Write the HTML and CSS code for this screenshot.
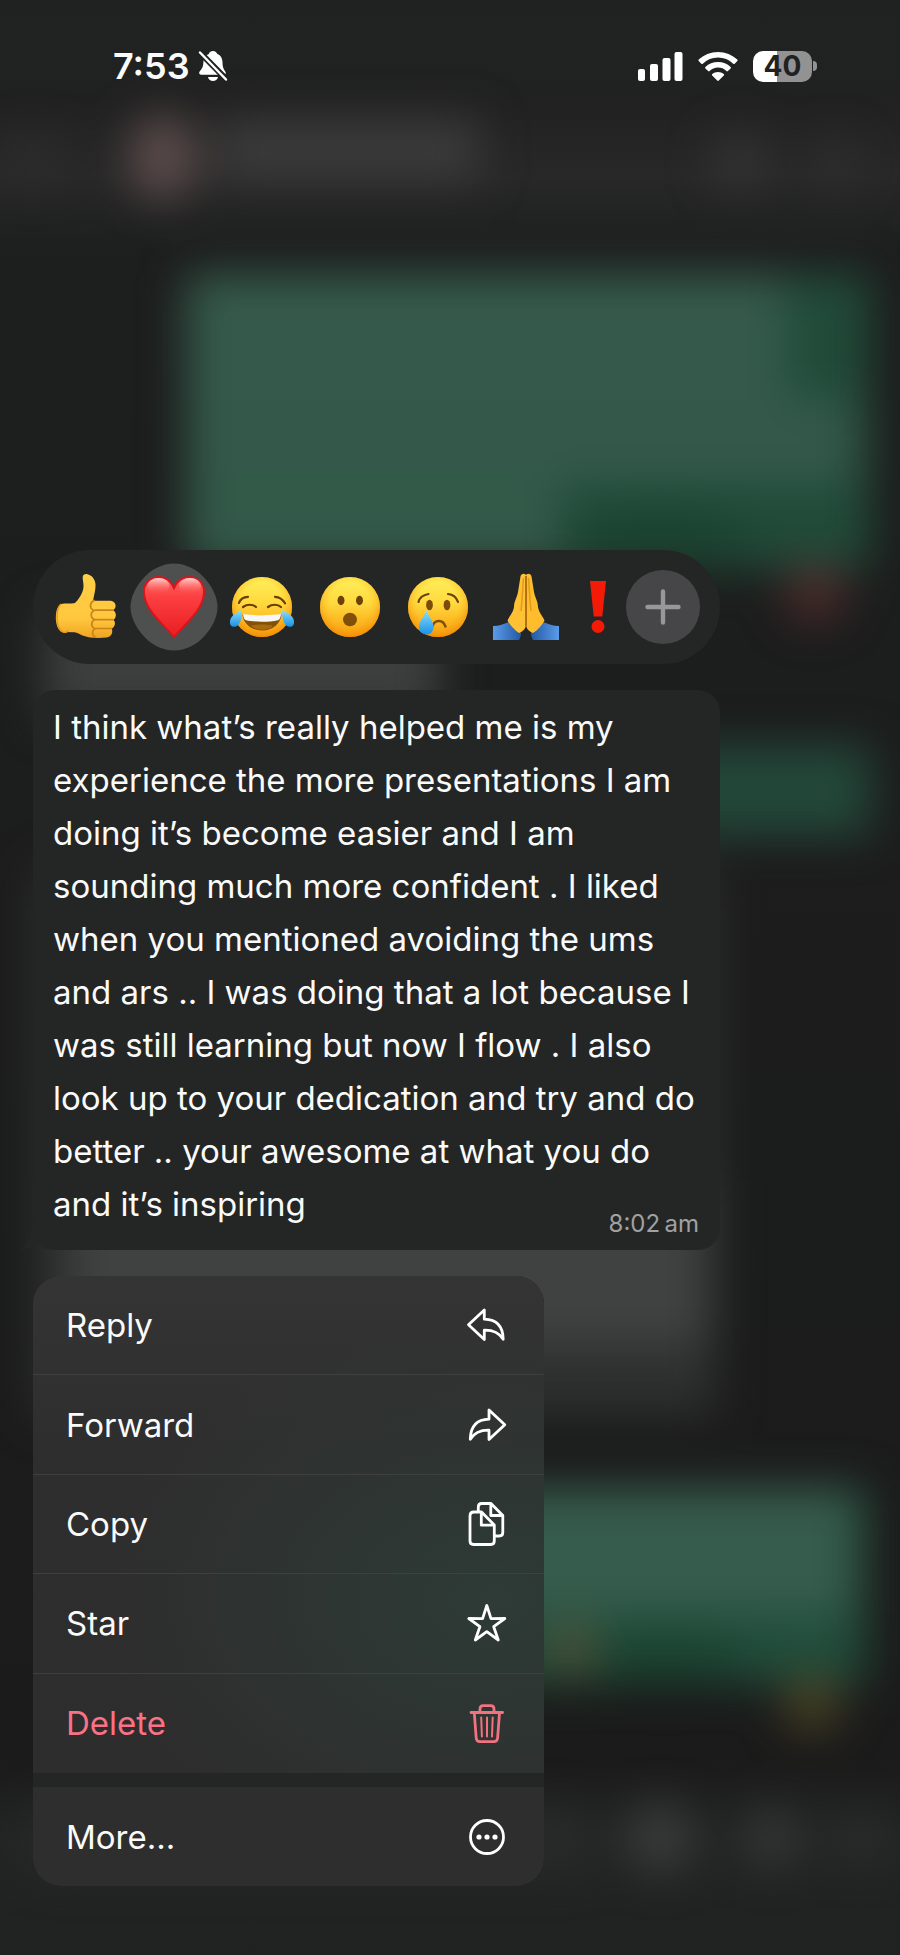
FILE: index.html
```html
<!DOCTYPE html>
<html lang="en">
<head>
<meta charset="utf-8">
<meta name="viewport" content="width=device-width, initial-scale=1">
<title>Message actions</title>
<link rel="stylesheet" href="styles.css">
</head>
<body>
<svg class="backdrop" viewBox="0 0 900 1955" preserveAspectRatio="none" aria-hidden="true">
  <defs>
    <filter id="soft" color-interpolation-filters="sRGB" filterUnits="userSpaceOnUse" x="-100" y="-100" width="1100" height="2155"><feGaussianBlur stdDeviation="22"/></filter>
    <linearGradient id="base" x1="0" y1="0" x2="0" y2="1">
      <stop offset="0" stop-color="#202222"/><stop offset=".05" stop-color="#212121"/><stop offset=".09" stop-color="#282828"/>
      <stop offset=".13" stop-color="#1d1e1e"/><stop offset=".9" stop-color="#1b1b1b"/><stop offset=".94" stop-color="#232424"/><stop offset="1" stop-color="#202121"/>
    </linearGradient>
  </defs>
  <rect width="900" height="1955" fill="url(#base)"/>
  <g filter="url(#soft)">
    <rect x="215" y="120" width="265" height="60" fill="#3c3b3b"/>
    <ellipse cx="163" cy="157" rx="34" ry="42" fill="#5d4c4c"/>
    <rect x="0" y="140" width="65" height="40" fill="#2d2d2d"/>
    <circle cx="740" cy="162" r="28" fill="#353434"/>
    <circle cx="835" cy="165" r="24" fill="#302f2f"/>
    <rect x="186" y="274" width="684" height="294" fill="#214b39"/>
    <rect x="186" y="274" width="600" height="204" fill="#355a4b"/>
    <rect x="186" y="400" width="670" height="82" fill="#34594a"/>
    <rect x="186" y="470" width="374" height="98" fill="#335949"/>
    <ellipse cx="660" cy="535" rx="90" ry="25" fill="#1b4330"/>
    <circle cx="815" cy="592" r="30" fill="#4d2b2a"/>
    <rect x="45" y="610" width="395" height="110" fill="#3d3f3e"/>
    <rect x="500" y="746" width="370" height="90" fill="#23483a"/>
    <rect x="36" y="870" width="680" height="545" fill="#2e2f2f"/>
    <rect x="70" y="1180" width="640" height="165" fill="#404141"/>
    <rect x="230" y="1488" width="636" height="195" fill="#214d3b"/>
    <rect x="230" y="1488" width="625" height="125" fill="#365c4d"/>
    <ellipse cx="665" cy="1660" rx="80" ry="24" fill="#1b4330"/>
    <circle cx="572" cy="1648" r="27" fill="#4b5139"/>
    <circle cx="812" cy="1703" r="29" fill="#484023"/>
    <rect x="30" y="1810" width="560" height="60" fill="#292a2a"/>
    <circle cx="660" cy="1838" r="34" fill="#3a3b3b"/>
    <circle cx="772" cy="1838" r="29" fill="#353636"/>
    <circle cx="860" cy="1838" r="24" fill="#2d2e2e"/>
  </g>
</svg>

<div class="screen">
  <header class="status">
    <div class="status-left">
      <time class="clock">7:53</time>
      <svg width="30" height="32" viewBox="0 0 30 32" role="img" aria-label="Silent">
        <path fill="#fff" d="M10.800 4C11.600 1.800 13 1 15 1s3.500 1 4.300 3c3.600 1.300 5.200 4.600 5.200 8.500 0 3.800.9 6.600 2.600 8.700 1 1.300.9 3.500-.8 3.500H3C1 24.700.7 22.700 1.800 21.300 4.300 18.500 5.300 16.500 5.400 12c.1-3.800 1.900-6.700 5.400-8zM10 27h10c-.5 2.400-2.600 4-5 4s-4.500-1.600-5-4z"/>
        <path d="M1 1.500 29 30" stroke="#212121" stroke-width="6"/>
        <path d="M2 2.500 28 29.500" stroke="#fff" stroke-width="2.500" stroke-linecap="round"/>
      </svg>
    </div>
    <div class="status-right">
      <svg width="45" height="29" viewBox="0 0 45 29" fill="#fff" role="img" aria-label="Signal"><rect y="17" width="7" height="12" rx="2"/><rect x="12" y="12" width="8" height="17" rx="2"/><rect x="24.500" y="6" width="8" height="23" rx="2"/><rect x="36.500" width="8" height="29" rx="2"/></svg>
      <svg width="40" height="30" viewBox="0 0 40 30" fill="#fff" role="img" aria-label="Wi-Fi"><path d="M20 1c7.500 0 14.300 2.900 19.300 7.600.5.500.5 1 0 1.500l-2.600 2.600c-.5.500-1 .5-1.500 0A22 22 0 0 0 20 6.600 22 22 0 0 0 4.800 12.700c-.5.500-1 .5-1.500 0L.7 10.100c-.5-.5-.5-1 0-1.500C5.700 3.900 12.500 1 20 1z"/><path d="M20 11c4.900 0 9.300 1.900 12.600 4.900.5.500.5 1 0 1.500L29.900 20c-.5.500-1 .5-1.500 0A12.300 12.300 0 0 0 20 16.600c-3.200 0-6.200 1.300-8.400 3.400-.5.500-1 .5-1.500 0l-2.700-2.600c-.5-.5-.5-1 0-1.500C10.700 12.900 15.100 11 20 11z"/><path d="M20 21c2.200 0 4.200.8 5.800 2.100.5.500.5 1 0 1.500l-5 4.900c-.5.500-1.100.5-1.600 0l-5-4.900c-.5-.5-.5-1 0-1.500C15.800 21.800 17.800 21 20 21z"/></svg>
      <div class="battery"><span class="level">40</span><span class="nub"></span></div>
    </div>
  </header>

  <main class="focus">
    <div class="reactions">
      <button class="react" aria-label="Thumbs up">
        <svg width="66" height="68" viewBox="0 0 66 68"><defs><linearGradient id="th" x1="0" y1="0" x2="0" y2="1"><stop offset="0" stop-color="#ffcf48"/><stop offset=".7" stop-color="#ffc73e"/><stop offset="1" stop-color="#f0a321"/></linearGradient></defs>
          <path fill="url(#th)" d="M8 31c5-1 10 0 14-1 4-4 8-10 8.500-16 .2-4-1-7.500-.8-10C30 1.500 32 .8 34.500 1.200c4 .8 7.500 4.500 8 10 .4 5-1.400 10-2.500 16.500h17c6 0 7.500 7 3 9.500 4 2 3.500 8 .3 9.500 3 2.500 1.700 7.500-1.800 8.800 2 3.500 0 8.500-5 9-8 1-18 .5-24-2-3-1.200-5-3-8-3.200L9 59C1 56 1 34 8 31z"/>
          <path d="M8 31c-6 6-5 25 2 28 3 .8 5-.2 5-2" fill="none" stroke="#e59b20" stroke-width="1.500"/>
          <path d="M41 27.500c-4 2-5 7-1 9.500M60 37.200H42c-5 1.500-5 8 0 9.400h18M41.500 46.800c-4 2-3.500 7.500.5 8.700h16.500M42 55.700c-3 1.500-3.500 6 0 8.200" fill="none" stroke="#c98518" stroke-width="1.700" stroke-linecap="round"/></svg>
      </button>
      <button class="react selected" aria-label="Heart" aria-pressed="true">
        <svg class="halo" viewBox="0 0 88 88" aria-hidden="true"><path fill="#4e504f" d="M44 .5C54 .5 65 5 73.500 14S87.500 34 87.500 44 82 65 73.500 74 54 87.500 44 87.500 23 83 14.500 74 .5 54 .5 44 6 23 14.500 14 34 .5 44 .5z"/></svg>
        <svg width="64" height="64" viewBox="0 0 64 64"><defs><linearGradient id="he" x1="0" y1="0" x2="0" y2="1"><stop offset="0" stop-color="#ff6662"/><stop offset=".35" stop-color="#fb3e40"/><stop offset="1" stop-color="#e91d22"/></linearGradient><linearGradient id="hh" x1="0" y1="0" x2="0" y2="1"><stop offset="0" stop-color="#ffd5d0"/><stop offset="1" stop-color="#ff5554" stop-opacity="0"/></linearGradient></defs>
          <path d="M32 62C20 48 3 35 2 18 1 8 9 2 17 2c7 0 12 4 15 11C35 6 40 2 47 2c8 0 16 6 15 16-1 17-18 30-30 44z" fill="url(#he)" stroke="#d8151c" stroke-width="2"/>
          <ellipse cx="16.500" cy="11" rx="11" ry="8" fill="url(#hh)"/><ellipse cx="48" cy="11" rx="11" ry="8" fill="url(#hh)"/></svg>
      </button>
      <button class="react" aria-label="Tears of joy">
        <svg width="66" height="62" viewBox="0 0 66 62"><defs><linearGradient id="fa" x1="0" y1="0" x2="0" y2="1"><stop offset="0" stop-color="#fff05a"/><stop offset=".45" stop-color="#ffd83d"/><stop offset="1" stop-color="#fa9a0a"/></linearGradient><radialGradient id="fr" cx=".5" cy=".42" r=".58"><stop offset=".55" stop-color="#ffc928" stop-opacity="0"/><stop offset="1" stop-color="#f18a05" stop-opacity=".85"/></radialGradient><linearGradient id="te" x1="0" y1="0" x2="0" y2="1"><stop offset="0" stop-color="#8be0fc"/><stop offset="1" stop-color="#1a91e6"/></linearGradient></defs>
          <circle cx="33" cy="31" r="30" fill="url(#fa)"/><circle cx="33" cy="31" r="30" fill="url(#fr)"/>
          <path d="M10 27c1-3.500 4-6 9-6.200M46 20.800c5 .2 8 3 10 6.500M14 31c4-3 10-3 13 0M39 31c4-3 10-3 13 0" stroke="#6b3f00" stroke-width="2.200" fill="none" stroke-linecap="round"/>
          <path d="M13.500 38.500c12 1.500 27 1.500 39 0C52 47 44 54.500 33 54.500S14 47 13.500 38.500z" fill="#855008"/><path d="M14 38c12 1.500 26 1.500 38 0-.3 3-1 5.800-3 6.200-9 2-23 2-32 0-2-.4-2.700-3.200-3-6.200z" fill="#f7f7f7"/><path d="M22 50c4-2 18-2 22 0-5 5-17 5-22 0z" fill="#a96a0e"/>
          <path d="M12.500 34c1.500 8-2 17-7.500 16.800C-.5 50.500 0 43 4 39.500 7 37 10 36 12.500 34zM53.500 34c-1.500 8 2 17 7.500 16.800 5.500-.3 5-7.800 1-11.300-3-2.500-6-3.500-8.500-5.500z" fill="url(#te)"/></svg>
      </button>
      <button class="react" aria-label="Surprised">
        <svg width="62" height="62" viewBox="0 0 62 62"><circle cx="31" cy="31" r="30" fill="url(#fa)"/><circle cx="31" cy="31" r="30" fill="url(#fr)"/><ellipse cx="22" cy="24.500" rx="3.500" ry="4.700" fill="#6d4107"/><ellipse cx="40.500" cy="24.500" rx="3.500" ry="4.700" fill="#6d4107"/><ellipse cx="31" cy="43.500" rx="7" ry="6.800" fill="#80500a"/></svg>
      </button>
      <button class="react" aria-label="Sad">
        <svg width="62" height="62" viewBox="0 0 62 62"><circle cx="31" cy="31" r="30" fill="url(#fa)"/><circle cx="31" cy="31" r="30" fill="url(#fr)"/><ellipse cx="22.500" cy="29" rx="3.400" ry="5.200" fill="#7b4c0a"/><ellipse cx="40" cy="29" rx="3.400" ry="5.200" fill="#7b4c0a"/><path d="M11.500 26c1-4.500 4.500-7 10-8M41 18c5 .5 8.500 3.500 10 8" stroke="#6d4107" stroke-width="2.200" fill="none" stroke-linecap="round"/><path d="M25 51c2.500-8 11-8 13.500-.5" stroke="#80500a" stroke-width="2.500" fill="none" stroke-linecap="round"/><path d="M19.500 34c-2.500 7-7.500 11-7.500 17 0 4.500 3.500 7.500 7.500 7.500S26.500 55.500 26.500 51c0-6-5-10-7-17z" fill="url(#te)"/></svg>
      </button>
      <button class="react" aria-label="Folded hands">
        <svg width="68" height="68" viewBox="0 0 68 68"><defs><linearGradient id="sl" x1="0" y1="0" x2="1" y2="0"><stop offset="0" stop-color="#5a9bea"/><stop offset="1" stop-color="#2459a3"/></linearGradient><linearGradient id="sr" x1="1" y1="0" x2="0" y2="0"><stop offset="0" stop-color="#5a9bea"/><stop offset="1" stop-color="#2459a3"/></linearGradient></defs>
          <path d="M1 53c6 0 11-2 17-4.500L29 60c0 3-1 5-2 7H1z" fill="url(#sl)"/><path d="M67 53c-6 0-11-2-17-4.500L39 60c0 3 1 5 2 7h26z" fill="url(#sr)"/>
          <path d="M34 2c-1.500-2-5-1.500-5.500 1.500L26 19c-1 6-4 9-4 15-1 6-4.500 9-6.500 13.500C18 52 22 57 27 60c5-2 7-5 7-9z" fill="#ffc133"/><path d="M34 2c1.500-2 5-1.500 5.500 1.500L42 19c1 6 4 9 4 15 1 6 4.500 9 6.500 13.500C50 52 46 57 41 60c-5-2-7-5-7-9z" fill="#ffbd2d"/>
          <path d="M34 3v50" stroke="#a96b10" stroke-width="1.800"/><path d="M31.500 5c-1 12-1.500 25-2.500 33M36.500 5c1 12 1.500 25 2.500 33" stroke="#e49a1c" stroke-width="1.500" fill="none"/></svg>
      </button>
      <button class="react last" aria-label="Exclamation mark">
        <svg width="18" height="54" viewBox="0 0 18 54" fill="#f31a08"><path d="M1 1h16l-3.700 35.500H4.700z"/><circle cx="9" cy="46.500" r="6.500"/></svg>
      </button>
      <button class="add" aria-label="More reactions">
        <svg width="36" height="36" viewBox="0 0 36 36"><path d="M18 2.500v31M2.500 18h31" stroke="#98989b" stroke-width="4.400" stroke-linecap="round"/></svg>
      </button>
    </div>

    <article class="bubble">
      <svg class="tail" width="30" height="50" viewBox="0 0 30 50" aria-hidden="true"><path d="M13 0h17v50c-5-1-8-3-10-5-5 3-12 4-20 4C8 44 13 35 13 20z" fill="#242625"/></svg>
      <p class="text">I think what’s really helped me is my<br>experience the more presentations I am<br>doing it’s become easier and I am<br>sounding much more confident . I liked<br>when you mentioned avoiding the ums<br>and ars .. I was doing that a lot because I<br>was still learning but now I flow . I also<br>look up to your dedication and try and do<br>better .. your awesome at what you do<br>and it’s inspiring</p>
      <time class="sent">8:02&#8201;am</time>
    </article>

    <div class="menu">
      <div class="group">
        <button class="item">Reply<svg class="icon" viewBox="0 0 42 44"><path d="M18.300 7v9.200C30 16.500 37 22 37.200 36.300 33 29.500 27 27 18.300 27.200v9.300L2.500 21.700z"/></svg></button>
        <button class="item">Forward<svg class="icon" viewBox="0 0 42 44"><path d="M23 7v9.200C11.500 16.500 4.500 22.500 4.300 36.300 8.500 29.500 14 27 23 27.200v9.300l15.800-14.800z"/></svg></button>
        <button class="item">Copy<svg class="icon" viewBox="0 0 42 44"><path d="M12.300 9.500V5c0-2.200 1.200-3.500 3.500-3.500H25L36.800 13.500v17c0 2.200-1.300 3.500-3.500 3.500h-4.500M24.800 1.500v12h12M8 10h7.500l12.800 13v16c0 2.200-1.300 3.500-3.500 3.500H7.500C5.200 42.500 4 41.200 4 39V14c0-2.500 1.500-4 4-4zM15.300 10v13.200h13"/></svg></button>
        <button class="item">Star<svg class="icon" viewBox="0 0 42 44"><path d="M20.800 4.500 25 17.600 38.800 17.500 27.700 25.700 32.300 39 20.800 30.700 9.300 39 13.900 25.700 2.800 17.500 16.600 17.600z"/></svg></button>
        <button class="item danger">Delete<svg class="icon" viewBox="0 0 42 44"><path d="M5 11.500h31.600M14 11V8c0-2.200 1-3.300 3.200-3.300h7.500C27 4.700 28 5.800 28 8v3M8.300 12l1.900 25c.2 2.500 1.400 3.700 3.700 3.700h14c2.300 0 3.500-1.200 3.700-3.700L33.500 12"/><path class="thin" d="m15.200 16.500.7 19M21 16.500v19M26.700 16.500l-.7 19"/></svg></button>
      </div>
      <div class="group more">
        <button class="item">More...<svg class="icon" viewBox="0 0 42 44"><circle cx="21" cy="22" r="16.500"/><g fill="#fff" stroke="none"><circle cx="13" cy="22" r="2.600"/><circle cx="21" cy="22" r="2.600"/><circle cx="29" cy="22" r="2.600"/></g></svg></button>
      </div>
    </div>
  </main>
</div>
</body>
</html>
```
FILE: styles.css
```css
* { box-sizing: border-box; }

body {
  margin: 0;
  background: #1c1c1c;
  color: #fafafa;
  font-family: Inter, "Liberation Sans", sans-serif;
}

button {
  margin: 0;
  padding: 0;
  border: 0;
  background: none;
  color: inherit;
  font: inherit;
}

.screen {
  position: relative;
  min-height: 100vh;
  padding-bottom: 70px;
}

.backdrop {
  position: absolute;
  top: 0;
  left: 0;
  width: 100%;
  height: 100%;
}

.status {
  display: flex;
  justify-content: space-between;
  align-items: center;
  height: 132px;
  padding: 0 83px 0 113px;
}

.status-left,
.status-right {
  display: flex;
  align-items: center;
}

.status-left { gap: 8px; }
.status-right { gap: 15px; }

.clock {
  font-size: 36px;
  font-weight: 600;
  line-height: 40px;
}

.battery {
  display: flex;
  align-items: center;
  gap: 1px;
}

.level {
  width: 59px;
  height: 31px;
  border-radius: 10px;
  background: linear-gradient(90deg, #fff 40%, #929292 40%);
  color: #212121;
  font-size: 28px;
  font-weight: 700;
  line-height: 31px;
  text-align: center;
}

.nub {
  width: 4px;
  height: 10px;
  border-radius: 0 5px 5px 0;
  background: #929292;
}

.focus {
  display: flex;
  flex-direction: column;
  gap: 26px;
  max-width: 753px;
  padding: 418px 33px 0;
}

.reactions {
  display: flex;
  align-items: center;
  height: 114px;
  padding: 0 20px 0 9px;
  border-radius: 57px;
  background: #242625;
}

.react {
  position: relative;
  display: grid;
  place-items: center;
  width: 88px;
  height: 88px;
}

.react svg { position: relative; }

.react .halo {
  position: absolute;
  inset: 0;
}

.last {
  flex: 1;
  width: auto;
}

.add {
  display: grid;
  place-items: center;
  width: 74px;
  height: 74px;
  border-radius: 50%;
  background: #464648;
}

.bubble {
  position: relative;
  padding: 11px 20px 19px;
  border-radius: 22px;
  background: #242625;
}

.tail {
  position: absolute;
  bottom: 0;
  left: -13px;
}

.text {
  position: relative;
  margin: 0;
  font-size: 33px;
  line-height: 53px;
  white-space: nowrap;
}

.sent {
  position: absolute;
  right: 21px;
  bottom: 10px;
  color: #a0a1a1;
  font-size: 24px;
  line-height: 32px;
}

.menu {
  width: 511px;
  max-width: 100%;
  overflow: hidden;
  border-radius: 28px;
  background: #242525;
}

.group {
  display: grid;
  grid-template-rows: repeat(5, 1fr);
  height: 497px;
  background:
    radial-gradient(ellipse at 90% 65%, rgba(46, 62, 56, .8), transparent 60%),
    linear-gradient(#343434, #2e2e2e 35%, #2d2d2d);
}

.more {
  grid-template-rows: 1fr;
  height: 99px;
  margin-top: 14px;
  background: #2e2e2e;
}

.item {
  display: flex;
  justify-content: space-between;
  align-items: center;
  padding: 0 36px 0 33px;
  border-bottom: 1px solid #3e4040;
  font-size: 33px;
  text-align: left;
}

.item:last-child { border-bottom: 0; }

.danger { color: #fb7185; }

.icon {
  width: 42px;
  height: 44px;
  fill: none;
  stroke: #fff;
  stroke-width: 2.8;
  stroke-linecap: round;
  stroke-linejoin: round;
}

.danger .icon { stroke: #f2727f; }
.icon .thin { stroke-width: 2; }
```
